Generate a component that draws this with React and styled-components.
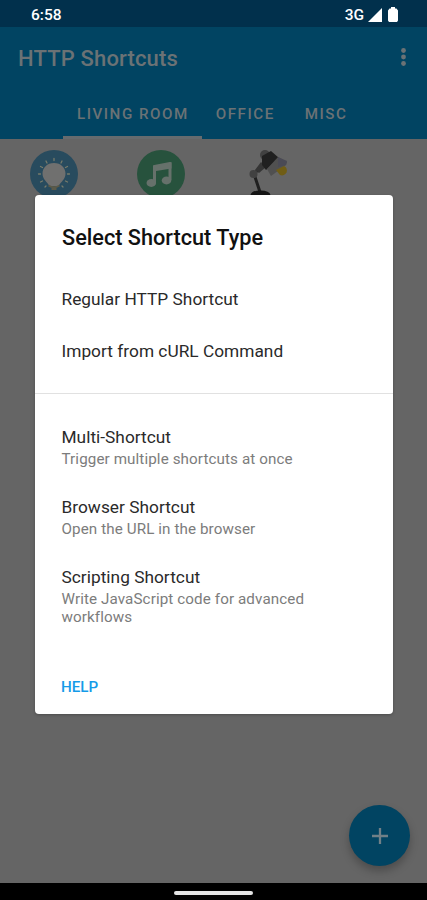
import styled, { createGlobalStyle } from 'styled-components';

const GlobalStyle = createGlobalStyle`
    * {
        box-sizing: border-box;
    }

    body {
        margin: 0;
        background: #666;
        font-family: Roboto, "Liberation Sans", sans-serif;
    }
`;

const Screen = styled.div`
    position: relative;
    display: flex;
    flex-direction: column;
    width: 427px;
    height: 900px;
    overflow: hidden;
    background: #656565;
`;

const StatusBar = styled.div`
    display: flex;
    align-items: center;
    justify-content: space-between;
    height: 27px;
    padding: 2px 29px 0 31px;
    background: #01304c;
    color: #fff;
    font-size: 15.5px;
    font-weight: 500;
`;

const StatusIcons = styled.div`
    display: flex;
    align-items: center;
    gap: 6px;
`;

const Network = styled.span`
    margin-right: -2px;
    font-size: 15.5px;
`;

const Header = styled.header`
    height: 112px;
    background: #014462;
    color: #6b7275;
`;

const Toolbar = styled.div`
    display: flex;
    align-items: center;
    justify-content: space-between;
    height: 62px;
    padding: 0 20px 0 18px;
`;

const AppTitle = styled.h1`
    margin: 0;
    font-size: 22px;
    font-weight: 500;
    letter-spacing: 0.15px;
`;

const Tabs = styled.nav`
    display: flex;
    height: 50px;
    padding-left: 63px;
`;

const Tab = styled.div`
    padding: 16px ${({ $end }) => $end || 13}px 0 14px;
    border-bottom: 3px solid ${({ $active }) => ($active ? '#666b6e' : 'transparent')};
    font-size: 15.2px;
    font-weight: 500;
    line-height: 18px;
    letter-spacing: 1.5px;
    white-space: nowrap;
`;

const Shortcuts = styled.main`
    display: grid;
    grid-template-columns: repeat(4, 107px);
    flex: 1;
    padding-top: 11px;
`;

const Shortcut = styled.div`
    display: flex;
    justify-content: center;
    height: 50px;
`;

const NavBar = styled.div`
    display: flex;
    justify-content: center;
    height: 17px;
    padding-top: 8px;
    background: #000;
`;

const NavHandle = styled.div`
    width: 79px;
    height: 4px;
    border-radius: 2px;
    background: #e4e4e4;
`;

const AddButton = styled.button`
    position: absolute;
    right: 17px;
    bottom: 34px;
    display: flex;
    align-items: center;
    justify-content: center;
    width: 61px;
    height: 61px;
    padding: 0;
    border: 0;
    border-radius: 50%;
    background: #014462;
    box-shadow: 0 5px 8px rgba(0, 0, 0, 0.25);
`;

const Dialog = styled.section`
    position: absolute;
    top: 195px;
    left: 35px;
    display: flex;
    flex-direction: column;
    width: 358px;
    height: 519px;
    border-radius: 4px;
    background: #fff;
    box-shadow: 0 1px 3px rgba(0, 0, 0, 0.25);
`;

const DialogTitle = styled.h2`
    margin: 0;
    padding: 29px 27px 22px;
    color: #111;
    font-size: 21.7px;
    font-weight: 500;
    line-height: 27px;
`;

const Option = styled.div`
    height: ${({ $tall }) => ($tall ? 70 : 52)}px;
    padding: ${({ $tall }) => ($tall ? 17 : 16)}px 27px 0 26.5px;
`;

const OptionLabel = styled.div`
    color: #2a2a2a;
    font-size: 17.3px;
    line-height: 20px;
    letter-spacing: 0.02px;
`;

const OptionDescription = styled.div`
    margin-top: 3px;
    color: #7c7c7c;
    font-size: 15.2px;
    line-height: 18px;
    letter-spacing: 0.1px;
`;

const Divider = styled.hr`
    width: 100%;
    height: 1px;
    margin: 16px 0;
    border: 0;
    background: #e1e1e1;
`;

const HelpButton = styled.button`
    align-self: flex-start;
    margin: auto 0 18px 26px;
    padding: 0;
    border: 0;
    background: none;
    color: #159be8;
    font-family: inherit;
    font-size: 15.2px;
    font-weight: 500;
    line-height: 18px;
`;

function SignalIcon() {
    return (
        <svg width="14" height="14" viewBox="0 0 14 14">
            <path d="M14 0v14H0z" fill="#fff" />
        </svg>
    );
}

function BatteryIcon() {
    return (
        <svg width="10" height="15" viewBox="0 0 10 15">
            <path d="M3 0h4v1.500h1.500L10 3.500V13.500L9 15H1l-1-1.500V3.500L1.500 1.500H3z" fill="#fff" />
        </svg>
    );
}

function MoreIcon() {
    return (
        <svg width="7" height="20" viewBox="0 0 7 20" fill="#6b7275">
            <circle cx="3.500" cy="2.500" r="2.400" />
            <circle cx="3.500" cy="9" r="2.400" />
            <circle cx="3.500" cy="15.500" r="2.400" />
        </svg>
    );
}

function BulbIcon() {
    return (
        <svg width="48" height="48" viewBox="0 0 48 48">
            <circle cx="24" cy="24" r="24" fill="#284b5e" />
            <g stroke="#777b6b" strokeWidth="1.300" strokeLinecap="round">
                <path d="M24 8.500v2M16 11l1 2M32 11l-1 2M10.500 16.500l2 1M37.500 16.500l-2 1M8.500 24h2M39.500 24h-2M10.500 32l2-1M37.500 32l-2-1M15 37l1-1M33 37l-1-1" />
            </g>
            <path d="M24 13c-7 0-11.500 5-11.500 10.500 0 6 4.500 8 7 12.500h9c2.500-4.500 7-6.500 7-12.500C35.500 18 31 13 24 13z" fill="#70706f" />
            <path d="M18.500 35.500q5.500 3.500 11 0M21.500 39h5" stroke="#5c5a48" strokeWidth="1.800" fill="none" />
        </svg>
    );
}

function MusicIcon() {
    return (
        <svg width="48" height="48" viewBox="0 0 48 48">
            <circle cx="24" cy="24" r="24" fill="#27523d" />
            <path d="M17.500 33V16.500L33 13.500V30" stroke="#66716b" strokeWidth="3" fill="none" strokeLinejoin="round" />
            <path d="M16 15.500q9 0 18.500-3.500v6.500L16 21.500z" fill="#66716b" />
            <ellipse cx="14.300" cy="33" rx="4.800" ry="3.900" fill="#66716b" />
            <ellipse cx="29.500" cy="30.500" rx="4.800" ry="3.900" fill="#66716b" />
        </svg>
    );
}

function LampIcon() {
    return (
        <svg width="48" height="48" viewBox="0 0 48 48">
            <circle cx="21" cy="5" r="5" fill="#414141" />
            <path d="M22 11L10 24l6 18" stroke="#202020" strokeWidth="3" fill="none" />
            <path d="M11 20l6-8 5 5-7 6z" fill="#353535" />
            <circle cx="9.500" cy="24" r="4" fill="#414141" />
            <path d="M18 6l9-5 8 7-13 12-4-5z" fill="#202020" />
            <path d="M34 7l9 5-1 3-15 11-4-7z" fill="#505050" />
            <path d="M34 7l9 4-1 4-8 2z" fill="#4a4a55" />
            <path d="M32 20l8-4a4.500 4.500 0 0 1-4 9z" fill="#705d15" />
            <path d="M6.500 45q1-4.500 10-4.500t10 4.500z" fill="#151515" />
        </svg>
    );
}

function PlusIcon() {
    return (
        <svg width="16" height="16" viewBox="0 0 16 16">
            <path d="M8 0v16M0 8h16" stroke="#718087" strokeWidth="2.300" />
        </svg>
    );
}

function ShortcutOption({ label, description }) {
    return (
        <Option $tall={Boolean(description)}>
            <OptionLabel>{label}</OptionLabel>
            {description && <OptionDescription>{description}</OptionDescription>}
        </Option>
    );
}

export default function App() {
    return (
        <>
            <GlobalStyle />
            <Screen>
                <StatusBar>
                    <span>6:58</span>
                    <StatusIcons>
                        <Network>3G</Network>
                        <SignalIcon />
                        <BatteryIcon />
                    </StatusIcons>
                </StatusBar>
                <Header>
                    <Toolbar>
                        <AppTitle>HTTP Shortcuts</AppTitle>
                        <MoreIcon />
                    </Toolbar>
                    <Tabs>
                        <Tab $active>LIVING ROOM</Tab>
                        <Tab $end={16}>OFFICE</Tab>
                        <Tab>MISC</Tab>
                    </Tabs>
                </Header>
                <Shortcuts>
                    <Shortcut><BulbIcon /></Shortcut>
                    <Shortcut><MusicIcon /></Shortcut>
                    <Shortcut><LampIcon /></Shortcut>
                </Shortcuts>
                <AddButton aria-label="Add"><PlusIcon /></AddButton>
                <NavBar><NavHandle /></NavBar>
                <Dialog>
                    <DialogTitle>Select Shortcut Type</DialogTitle>
                    <ShortcutOption label="Regular HTTP Shortcut" />
                    <ShortcutOption label="Import from cURL Command" />
                    <Divider />
                    <ShortcutOption label="Multi-Shortcut" description="Trigger multiple shortcuts at once" />
                    <ShortcutOption label="Browser Shortcut" description="Open the URL in the browser" />
                    <ShortcutOption label="Scripting Shortcut" description="Write JavaScript code for advanced workflows" />
                    <HelpButton>HELP</HelpButton>
                </Dialog>
            </Screen>
        </>
    );
}
